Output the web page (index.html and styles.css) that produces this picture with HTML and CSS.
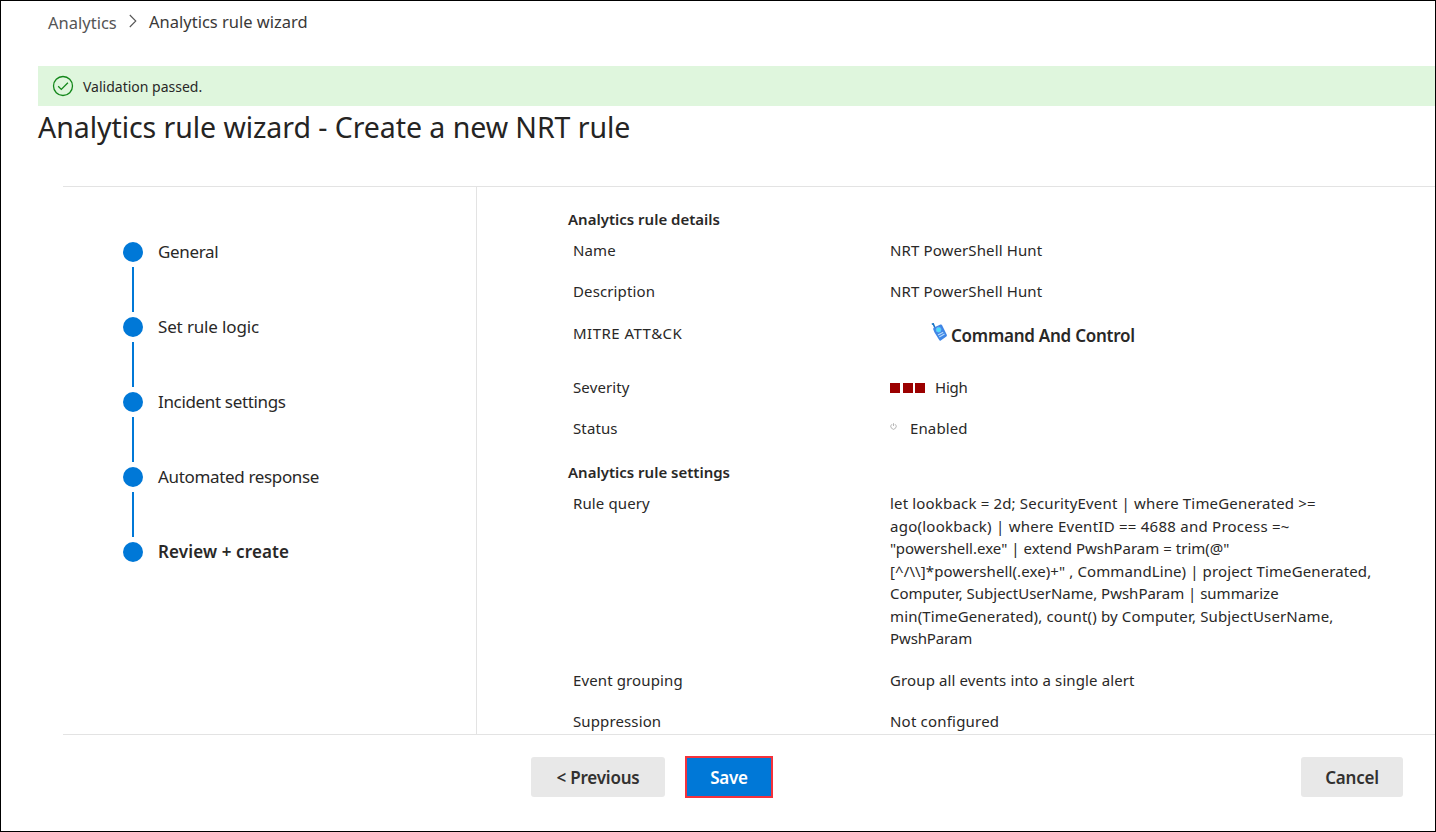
FILE: index.html
```html
<!DOCTYPE html>
<html lang="en">
<head>
<meta charset="utf-8">
<title>Analytics rule wizard</title>
<link rel="stylesheet" href="styles.css">
</head>
<body>
<div class="page">
  <nav class="breadcrumb">
    <span class="crumb crumb-parent">Analytics</span>
    <svg class="chevron" width="8" height="14" viewBox="0 0 8 14"><path d="M.8 1 L6.8 7 L.8 13" fill="none" stroke="#555" stroke-width="1.1"/></svg>
    <span class="crumb crumb-current">Analytics rule wizard</span>
  </nav>
  <div class="banner">
    <svg class="check" width="22" height="22" viewBox="0 0 22 22"><circle cx="11" cy="11" r="9.5" fill="none" stroke="#13871a" stroke-width="1.3"/><path d="M6.2 11.3 L9.3 14.4 L15.9 7.8" fill="none" stroke="#13871a" stroke-width="1.3"/></svg>
    <span class="banner-text">Validation passed.</span>
  </div>
  <h1 class="title">Analytics rule wizard - Create a new NRT rule</h1>
  <main class="wizard">
    <ol class="steps">
      <li class="step"><i class="dot"></i><span class="step-label">General</span></li>
      <li class="step"><i class="dot"></i><span class="step-label rule-logic">Set rule logic</span></li>
      <li class="step"><i class="dot"></i><span class="step-label">Incident settings</span></li>
      <li class="step"><i class="dot"></i><span class="step-label">Automated response</span></li>
      <li class="step"><i class="dot"></i><span class="step-label current">Review + create</span></li>
    </ol>
    <section class="details">
      <h2 class="group">Analytics rule details</h2>
      <div class="row"><span>Name</span><span>NRT PowerShell Hunt</span></div>
      <div class="row"><span>Description</span><span>NRT PowerShell Hunt</span></div>
      <div class="row row-mitre"><span class="mitre">MITRE ATT&amp;CK</span>
        <span class="tactic">
          <svg class="phone" width="17" height="20" viewBox="0 0 17 20"><path d="M.8 1.2 L2.2 .8 L4 5" fill="none" stroke="#1673c4" stroke-width="1.6"/><path d="M2.2 6.2 Q2 5 3 4.5 L9.4 1.6 Q10.6 1.1 11.1 2.2 L15.8 11.8 Q16.2 12.8 15.4 13.4 L9.8 17.4 Q8.8 18 8.2 17 L3.4 9.3 Z" fill="#3f86e6"/><circle cx="7.6" cy="6.7" r="2.5" fill="#4de0fa" stroke="#74b4f5" stroke-width=".6"/><path d="M7 12 L12.2 9.2 M8.3 14 L13.5 11" stroke="#b5d9fa" stroke-width="1.3"/></svg>
          <b class="tactic-name">Command And Control</b>
        </span></div>
      <div class="row"><span>Severity</span><span class="severity"><i class="sq"></i><i class="sq"></i><i class="sq"></i><span class="high">High</span></span></div>
      <div class="row"><span>Status</span><span class="status"><svg class="power" width="7" height="7" viewBox="0 0 7 7"><path d="M2 1.2 A2.7 2.7 0 1 0 5 1.2 M3.5 .2 V3" fill="none" stroke="#999" stroke-width=".7"/></svg><span>Enabled</span></span></div>
      <h2 class="group group-settings">Analytics rule settings</h2>
      <div class="row row-query"><span>Rule query</span>
        <span class="query"><span class="q1">let lookback = 2d; SecurityEvent | where TimeGenerated &gt;=</span><br><span class="q2">ago(lookback) | where EventID == 4688 and Process =~</span><br><span class="q3">"powershell.exe" | extend PwshParam = trim(@"</span><br><span class="q4">[^/\\]*powershell(.exe)+" , CommandLine) | project TimeGenerated,</span><br><span class="q5">Computer, SubjectUserName, PwshParam | summarize</span><br><span class="q6">min(TimeGenerated), count() by Computer, SubjectUserName,</span><br><span class="q7">PwshParam</span></span></div>
      <div class="row"><span>Event grouping</span><span>Group all events into a single alert</span></div>
      <div class="row"><span>Suppression</span><span class="not-configured">Not configured</span></div>
    </section>
  </main>
  <footer class="actions">
    <button class="btn previous">&lt; Previous</button>
    <button class="btn save">Save</button>
    <button class="btn cancel">Cancel</button>
  </footer>
</div>
</body>
</html>
```
FILE: styles.css
```css
* { box-sizing: border-box; }
body { margin: 0; font-family: "Noto Sans", "Open Sans", sans-serif; color: #292827; background: #fff; }
.page { width: 1436px; height: 832px; border: 1px solid #000; display: flex; flex-direction: column; overflow: hidden; white-space: nowrap; }
.breadcrumb { height: 65px; padding: 8px 0 0 47px; display: flex; align-items: flex-start; }
.crumb { font-size: 16.5px; line-height: 25px; }
.crumb-parent { width: 81px; padding-top: 1px; color: #555; }
.crumb-current { margin-left: 12px; color: #3a3938; }
.chevron { margin-top: 5px; }
.banner { height: 40px; margin-left: 37px; padding-left: 14px; background: #dff6dd; display: flex; align-items: center; }
.banner-text { margin-left: 9px; font-size: 14px; }
.title { height: 80px; margin: 0; padding-left: 37px; font-size: 28.5px; line-height: 43px; font-weight: 400; letter-spacing: -.06px; color: #252423; }
.wizard { height: 549px; margin-left: 62px; border-top: 1px solid #e3e3e3; border-bottom: 1px solid #e3e3e3; display: flex; }
.steps { width: 414px; flex: none; margin: 0; padding: 55px 0 0 60px; list-style: none; border-right: 1px solid #e3e3e3; }
.step { height: 75px; display: grid; grid-template-columns: 20px 1fr; column-gap: 15px; grid-template-rows: 20px 1fr; }
.dot { width: 20px; height: 20px; border-radius: 50%; background: #0078d7; }
.step:not(:last-child)::after { content: ""; width: 2px; height: 45px; margin: 5px 0 0 9px; background: #0078d7; }
.step-label { font-size: 17px; line-height: 20px; letter-spacing: -.34px; }
.rule-logic { letter-spacing: -.15px; }
.current { font-weight: 600; letter-spacing: .13px; }
.details { flex: 1; padding: 21px 0 0 91px; overflow: hidden; font-size: 15px; letter-spacing: .12px; }
.group { margin: 0; height: 21.5px; font-size: 15px; line-height: 22.5px; font-weight: 600; letter-spacing: 0; }
.group-settings { margin-top: 12px; height: 22.5px; }
.row { display: grid; grid-template-columns: 317px 1fr; padding: 9px 0 9.5px 5px; line-height: 22.5px; }
.row-mitre { height: 55px; padding-top: 10px; }
.mitre { letter-spacing: .48px; }
.row-query { padding-bottom: 10.5px; }
.tactic { display: flex; align-items: center; height: 30px; padding-left: 41px; }
.phone { margin-top: -8px; flex: none; }
.tactic-name { margin-left: 3px; font-size: 17px; font-weight: 600; letter-spacing: -.25px; }
.severity { display: flex; align-items: center; gap: 2.5px; }
.sq { width: 10px; height: 10px; margin-top: 2px; background: #9b0000; }
.high { margin-left: 7.5px; letter-spacing: -.2px; }
.status { display: flex; align-items: center; }
.power { margin: -2px 13px 0 0; }
.q1 { letter-spacing: .17px; }
.q2 { letter-spacing: .25px; }
.q3 { letter-spacing: .02px; }
.q4 { letter-spacing: .11px; }
.q5 { letter-spacing: -.01px; }
.q6 { letter-spacing: .16px; }
.q7 { letter-spacing: -.12px; }
.not-configured { letter-spacing: .2px; }
.actions { flex: 1; display: flex; padding: 21px 32px 0 530px; align-items: flex-start; }
.btn { height: 40px; margin-top: 1px; border: 0; border-radius: 3px; background: #e8e8e8; color: #323130; font: 600 17px "Noto Sans", "Open Sans", sans-serif; letter-spacing: -.2px; padding: 0; }
.previous { width: 134px; }
.save { width: 88px; height: 42px; margin: 0 0 0 20px; border: 2px solid #f4323c; border-radius: 0; background: #0078d7; color: #fff; }
.cancel { width: 102px; margin-left: auto; }
```
